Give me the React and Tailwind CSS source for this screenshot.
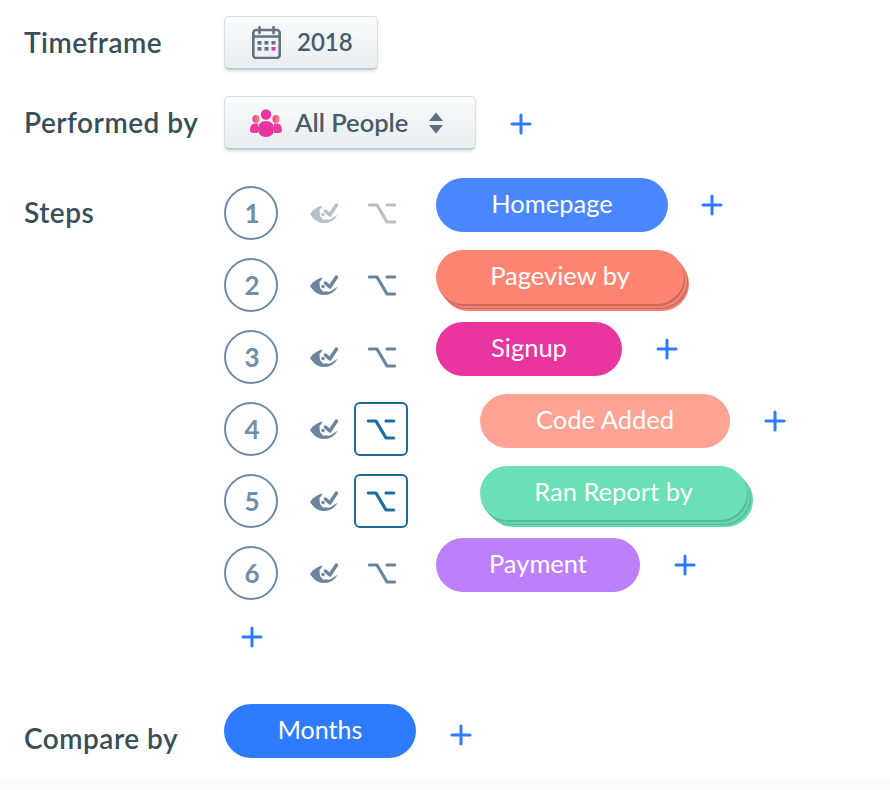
const steps = [
  { n: 1, label: "Homepage", pill: "w-[232px] -mr-px bg-[#4a86ff]", muted: true, plus: true },
  { n: 2, label: "Pageview by", pill: "w-[248px] bg-[#ff8472] shadow-[1px_2px_0_0_#c4695b,3px_4px_0_0_#f98070,4px_5px_0_0_#c4695b,5px_7px_0_0_#f98070]" },
  { n: 3, label: "Signup", pill: "w-[186px] bg-[#ea35a0]", plus: true },
  { n: 4, label: "Code Added", pill: "w-[250px] bg-[#ffa394]", indent: true, boxed: true, plus: true },
  { n: 5, label: "Ran Report by", pill: "w-[267px] bg-[#6be0b6] shadow-[1px_2px_0_0_#55bb97,3px_4px_0_0_#66d8ae,4px_5px_0_0_#55bb97,6px_7px_0_0_#66d8ae]", indent: true, boxed: true },
  { n: 6, label: "Payment", pill: "w-[204px] bg-[#bd7ffa]", plus: true },
];

const PlusIcon = () => (
  <svg width="22" height="22" viewBox="0 0 22 22" className="text-[#2f7bff]">
    <path d="M11 2v18M2 11h18" stroke="currentColor" strokeWidth="3" strokeLinecap="round" />
  </svg>
);

const EyeCheck = () => (
  <svg width="28" height="21" viewBox="0 0 28 21" fill="currentColor">
    <path d="M0 12C4 6.500 9 3.500 15 3.500c5 0 10 3.500 13 8.500-3 6-8 9-14 9S4 18 0 12z" />
    <path d="M15 0L9.500 8.500 10 14l3 3.500h7l8-5V0z" fill="#fff" />
    <circle cx="13" cy="12.500" r="1.700" />
    <path d="M15.500 9l4.300 4 6.700-10" fill="none" stroke="currentColor" strokeWidth="3.400" strokeLinecap="round" strokeLinejoin="round" />
  </svg>
);

const OptionKey = () => (
  <svg width="28" height="21" viewBox="0 0 28 21" fill="none">
    <path d="M1.500 2H9l10 17h7.500M19 2h7.500" stroke="currentColor" strokeWidth="3.200" strokeLinecap="round" strokeLinejoin="round" />
  </svg>
);

const CalendarIcon = () => (
  <svg width="29" height="33" viewBox="0 0 29 33" fill="none" className="text-[#65727e]">
    <rect x="1.300" y="4" width="26.400" height="28" rx="3" stroke="currentColor" strokeWidth="2.600" />
    <path d="M1.300 10.500h26.400M7.500 1v6M21.500 1v6" stroke="currentColor" strokeWidth="2.600" strokeLinecap="round" />
    <g fill="currentColor">
      <rect x="5.500" y="15" width="4" height="3.600" />
      <rect x="12.500" y="15" width="4" height="3.600" />
      <rect x="19.500" y="15" width="4" height="3.600" />
      <rect x="5.500" y="21" width="4" height="3.600" />
      <rect x="12.500" y="21" width="4" height="3.600" />
    </g>
    <rect x="19.500" y="21" width="4" height="3.600" fill="#ec2fb0" />
  </svg>
);

const PeopleIcon = () => (
  <svg width="32" height="28" viewBox="0 0 32 28">
    <defs>
      <linearGradient id="side" x1="0" y1="0" x2="1" y2="0">
        <stop offset="0" stopColor="#ec3c9c" />
        <stop offset="1" stopColor="#fb8a80" />
      </linearGradient>
    </defs>
    <ellipse cx="6" cy="10" rx="3.600" ry="4" fill="url(#side)" />
    <ellipse cx="26" cy="10" rx="3.600" ry="4" fill="url(#side)" />
    <path d="M0 21c0-4 2-6.500 5-6.500h3V24H3c-2 0-3-1-3-3zM32 21c0-4-2-6.500-5-6.500h-3V24h5c2 0 3-1 3-3z" fill="#ec3c9c" />
    <circle cx="16" cy="5.500" r="5.200" fill="#ea35a0" />
    <path d="M8 20c0-5 3-8 8-8s8 3 8 8c0 5-3 8-8 8s-8-3-8-8z" fill="#ea35a0" />
  </svg>
);

const SortIcon = () => (
  <svg width="14" height="22" viewBox="0 0 14 22" fill="#5a6f80">
    <path d="M7 .5l7 8.500H0zM7 21.500L0 13h14z" />
  </svg>
);

const Label = ({ children, className = "" }) => (
  <div className={`w-[200px] shrink-0 text-[28px] leading-8 tracking-[0.5px] font-semibold text-[#374e5b] ${className}`}>{children}</div>
);

const GrayButton = ({ className, children }) => (
  <div className={`flex h-[54px] items-center rounded-[5px] border border-[#d5e0e5] border-b-2 border-b-[#bccbd3] bg-gradient-to-b from-[#f9fbfb] to-[#e7edf0] font-semibold text-[#475b69] shadow-[0_2px_3px_rgba(60,80,90,0.12)] ${className}`}>
    {children}
  </div>
);

const Step = ({ step }) => {
  const iconColor = step.muted ? "text-[#b5c0c9]" : "text-[#68859d]";
  return (
    <div className="flex h-[62px] items-start">
      <div className="mt-2 flex w-[212px] shrink-0 items-center">
        <div className="flex h-[54px] w-[54px] items-center justify-center rounded-full border-2 border-[#6b8ba6] pl-0.5 text-[26px] font-bold text-[#6f8ea8]">
          {step.n}
        </div>
        <div className={`ml-8 -mt-0.5 ${iconColor}`}>
          <EyeCheck />
        </div>
        {step.boxed ? (
          <div className="ml-4 flex h-[54px] w-[54px] items-center justify-center rounded-md border-2 border-[#1d6a9c] text-[#1a6ea0]">
            <OptionKey />
          </div>
        ) : (
          <div className={`ml-[30px] ${iconColor}`}>
            <OptionKey />
          </div>
        )}
      </div>
      <div className={`flex items-center ${step.indent ? "ml-11" : ""}`}>
        <div className={`flex h-[54px] items-center justify-center rounded-[27px] pb-1 text-[25.5px] text-white ${step.pill}`}>
          {step.label}
        </div>
        {step.plus && (
          <div className="ml-[34px]">
            <PlusIcon />
          </div>
        )}
      </div>
    </div>
  );
};

export default function App() {
  return (
    <div className="flex min-h-[790px] flex-col bg-white font-['Lato',sans-serif]">
      <div className="px-6 pt-4">
        {/* Timeframe */}
        <div className="flex items-center">
          <Label className="-mt-0.5">Timeframe</Label>
          <GrayButton className="w-[154px] pl-[27px] text-[24px]">
            <CalendarIcon />
            <span className="ml-4 -mt-0.5">2018</span>
          </GrayButton>
        </div>

        {/* Performed by */}
        <div className="mt-[26px] flex items-center">
          <Label className="-mt-0.5">Performed by</Label>
          <GrayButton className="w-[252px] pl-[25px] text-[25.5px]">
            <PeopleIcon />
            <span className="ml-[13px]">All People</span>
            <span className="ml-[21px]">
              <SortIcon />
            </span>
          </GrayButton>
          <div className="ml-[34px] mt-0.5">
            <PlusIcon />
          </div>
        </div>

        {/* Steps */}
        <div className="mt-7 flex">
          <Label className="mt-[18px]">Steps</Label>
          <div>
            <div className="flex flex-col gap-2.5">
              {steps.map((step) => (
                <Step key={step.n} step={step} />
              ))}
            </div>
            <div className="ml-[17px] mt-[26px]">
              <PlusIcon />
            </div>
          </div>
        </div>

        {/* Compare by */}
        <div className="mt-[56px] flex items-start">
          <Label className="mt-[18px]">Compare by</Label>
          <div className="flex h-[54px] w-[192px] items-center justify-center rounded-[27px] bg-[#2f7bff] pb-0.5 text-[25px] text-white">
            Months
          </div>
          <div className="ml-[34px] mt-5">
            <PlusIcon />
          </div>
        </div>
      </div>
      <div className="mt-5 flex-1 bg-[#fbfbfb]" />
    </div>
  );
}
